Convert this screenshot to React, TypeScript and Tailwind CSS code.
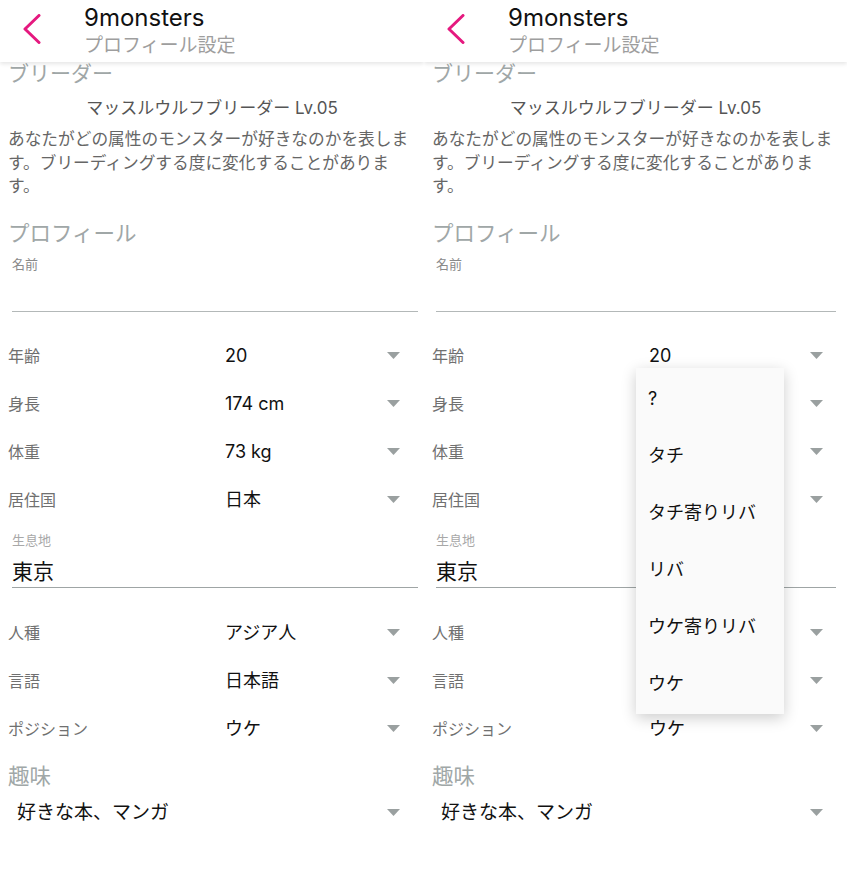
import React from 'react';

const font = { fontFamily: 'Inter, "Noto Sans CJK JP", sans-serif' };

type Row = { label: string; value: string };

const topRows: Row[] = [
  { label: '年齢', value: '20' },
  { label: '身長', value: '174 cm' },
  { label: '体重', value: '73 kg' },
  { label: '居住国', value: '日本' },
];

const bottomRows: Row[] = [
  { label: '人種', value: 'アジア人' },
  { label: '言語', value: '日本語' },
  { label: 'ポジション', value: 'ウケ' },
];

const positions = ['?', 'タチ', 'タチ寄りリバ', 'リバ', 'ウケ寄りリバ', 'ウケ'];

// rows whose value sits under the open menu
const covered = ['身長', '体重', '居住国', '人種', '言語'];

function Caret() {
  return (
    <svg width="13" height="7" viewBox="0 0 13 7" className="shrink-0">
      <polygon points="0,0 13,0 6.5,7" fill="#9aa0a0" />
    </svg>
  );
}

function SelectRow({ row, hideValue }: { row: Row; hideValue: boolean }) {
  return (
    <div className="grid h-[48px] grid-cols-[217px_1fr_auto] items-center pr-[16px]">
      <span className="text-[16px] text-[#707070]">{row.label}</span>
      <span className="text-[18px] text-[#111]">{hideValue ? '' : row.value}</span>
      <Caret />
    </div>
  );
}

function Phone({ menuOpen, width }: { menuOpen: boolean; width: string }) {
  const fieldMargin = menuOpen ? 'ml-[4px] mr-[3px]' : 'ml-[4px] -mr-[2px]';
  return (
    <div className={`relative h-[869px] shrink-0 overflow-hidden bg-white ${width}`} style={font}>
      {/* header */}
      <div className="relative z-10 flex h-[62px] items-start bg-white shadow-[0_2px_4px_rgba(0,0,0,0.1)]">
        <div className="w-[84px] pl-[22px] pt-[14px]">
          <svg width="20" height="30" viewBox="0 0 20 30">
            <polyline points="17,1.5 3,15 17,28.5" fill="none" stroke="#e5197f" strokeWidth="3" strokeLinecap="round" strokeLinejoin="round" />
          </svg>
        </div>
        <div className="flex flex-col">
          <span className="mt-[3px] text-[24px] leading-[30px] text-[#111]">9monsters</span>
          <span className="text-[19px] leading-[26px] text-[#9e9e9e]">プロフィール設定</span>
        </div>
      </div>

      <div className="px-[8px]">
        <div className="text-[21px] leading-[24px] text-[#a0a7a7]">ブリーダー</div>
        <div className="mt-[10px] text-center text-[17px] leading-[24px] text-[#555]">マッスルウルフブリーダー Lv.05</div>
        <p className="mt-[8px] text-[16.7px] leading-[23.5px] text-[#666]">
          あなたがどの属性のモンスターが好きなのかを表します。ブリーディングする度に変化することがあります。
        </p>

        <div className="mt-[20px] text-[21.5px] leading-[28px] text-[#a0a7a7]">プロフィール</div>
        <div className={`${fieldMargin} mt-[9px]`}>
          <div className="text-[13px] leading-[16px] text-[#8a8a8a]">名前</div>
          <div className="h-[40px] border-b border-[#b3b8b8]" />
        </div>

        <div className="mt-[20px]">
          {topRows.map((r) => (
            <SelectRow key={r.label} row={r} hideValue={menuOpen && covered.includes(r.label)} />
          ))}
        </div>

        <div className={`${fieldMargin} mt-[8px]`}>
          <div className="text-[13px] leading-[16px] text-[#a8a8a8]">生息地</div>
          <div className="border-b border-[#9fa5a5] pb-[1px] pt-[10px] text-[21px] leading-[28px] text-[#111]">東京</div>
        </div>

        <div className="mt-[21px]">
          {bottomRows.map((r) => (
            <SelectRow key={r.label} row={r} hideValue={menuOpen && covered.includes(r.label)} />
          ))}
        </div>

        <div className="mt-[9px] text-[21.5px] leading-[28px] text-[#a0a7a7]">趣味</div>
        <div className="mt-[9px] flex items-center justify-between pl-[9px] pr-[16px]">
          <span className="text-[19px] leading-[28px] text-[#111]">好きな本、マンガ</span>
          <Caret />
        </div>
      </div>

      {menuOpen && (
        <div className="absolute left-[212px] top-[368px] z-20 w-[148px] bg-[#fafafa] py-[2px] shadow-[0_4px_14px_rgba(0,0,0,0.2)]">
          {positions.map((p) => (
            <div key={p} className="flex h-[57px] items-center pl-[12px] text-[18px] text-[#111]">
              {p}
            </div>
          ))}
        </div>
      )}
    </div>
  );
}

export default function App() {
  return (
    <div className="flex h-[869px] w-[847px] overflow-hidden bg-white">
      <Phone menuOpen={false} width="w-[424px]" />
      <Phone menuOpen={true} width="w-[423px]" />
    </div>
  );
}
